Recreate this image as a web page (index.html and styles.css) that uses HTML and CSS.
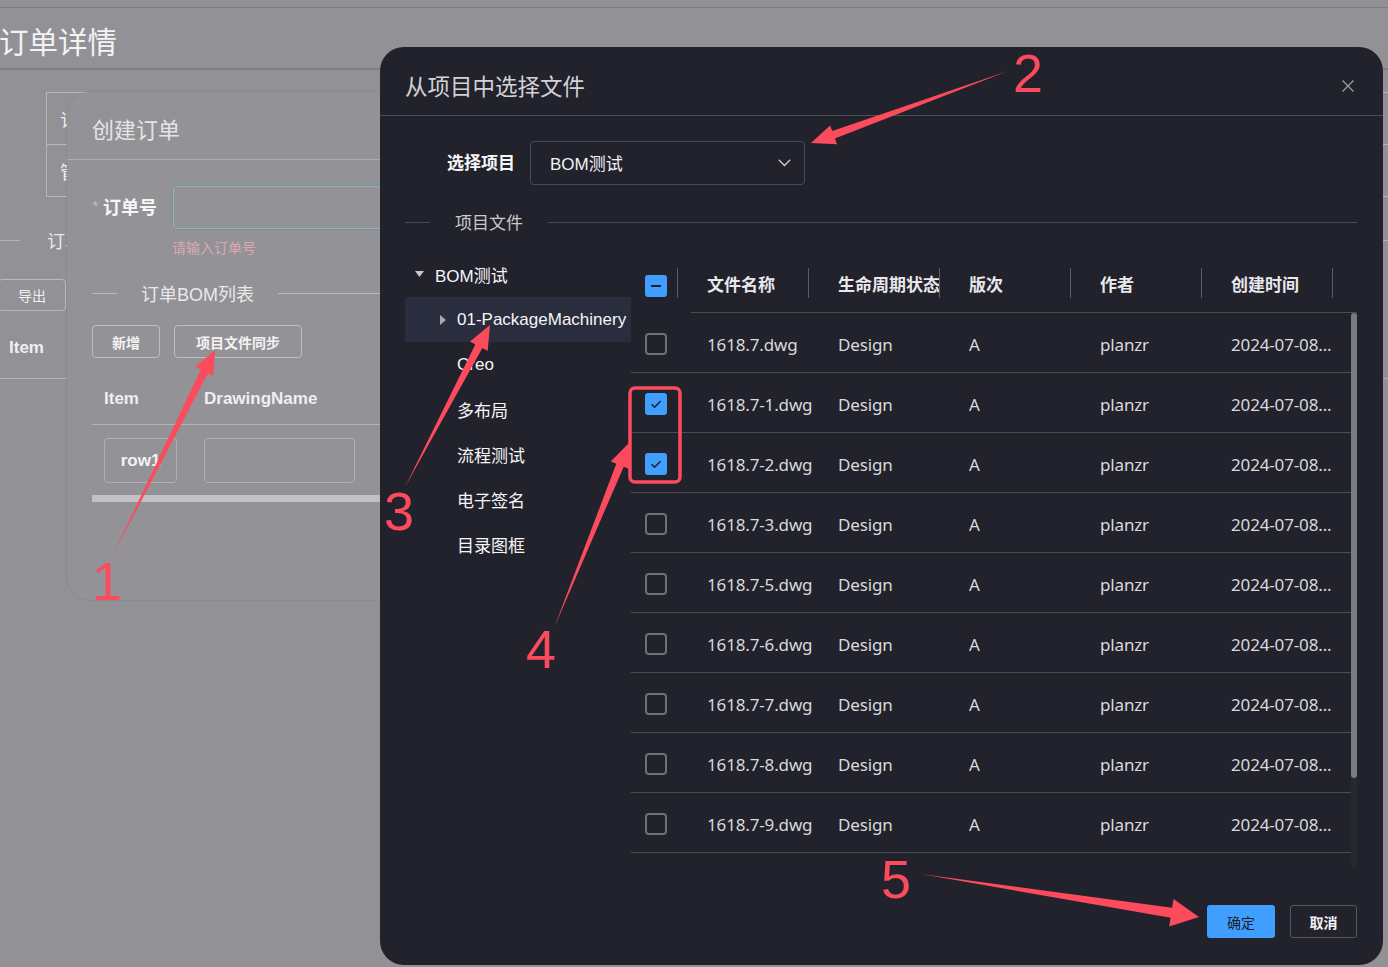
FILE: index.html
```html
<!DOCTYPE html>
<html lang="zh-CN">
<head>
<meta charset="utf-8">
<title>订单详情</title>
<link rel="stylesheet" href="styles.css">
</head>
<body>
<div class="page">
  <div class="topbar"></div>
  <div class="page-head"><h1 class="page-title">订单详情</h1></div>
  <div class="page-body">
    <div class="info-box">
      <div class="info-row">订单号</div>
      <div class="info-row">管理员</div>
    </div>
    <div class="bg-divider"><span class="bg-line-a"></span><span class="bg-divider-text">订单BOM列表</span><span class="bg-line-b"></span></div>
    <div class="bg-btn">导出</div>
    <div class="bg-table-head">Item</div>
  </div>
</div>

<div class="create-dialog">
  <div class="cd-head">创建订单</div>
  <div class="cd-body">
    <div class="cd-form-row">
      <div class="cd-label"><span class="cd-req">*</span>订单号</div>
      <div class="cd-input"></div>
    </div>
    <div class="cd-error">请输入订单号</div>
    <div class="cd-divider"><span class="cd-line-a"></span><span class="cd-divider-text">订单BOM列表</span><span class="cd-line-b"></span></div>
    <div class="cd-btns">
      <div class="cd-btn cd-btn-add">新增</div>
      <div class="cd-btn cd-btn-sync">项目文件同步</div>
    </div>
    <div class="cd-thead">
      <div class="cd-col1">Item</div>
      <div class="cd-col2">DrawingName</div>
    </div>
    <div class="cd-row">
      <div class="cd-in cd-in-1">row1</div>
      <div class="cd-in cd-in-2"></div>
    </div>
    <div class="cd-scroll"></div>
  </div>
</div>

<div class="modal">
  <div class="m-head">
    <div class="m-title">从项目中选择文件</div>
    <svg class="m-close" width="12" height="12" viewBox="0 0 12 12"><path d="M0.5 0.5L11.5 11.5M11.5 0.5L0.5 11.5" stroke="#9c9ca4" stroke-width="1.3" fill="none"/></svg>
  </div>
  <div class="m-body">
    <div class="m-select-row">
      <div class="m-label">选择项目</div>
      <div class="m-select">
        <span>BOM测试</span>
        <svg width="13" height="8" viewBox="0 0 13 8"><path d="M0.8 0.8L6.5 6.5L12.2 0.8" stroke="#d0d0d4" stroke-width="1.3" fill="none"/></svg>
      </div>
    </div>
    <div class="m-divider"><span class="m-line-a"></span><span class="m-divider-text">项目文件</span><span class="m-line-b"></span></div>
    <div class="m-content">
      <div class="tree">
        <div class="tree-row tree-root">
          <svg class="caret-down" width="9" height="6" viewBox="0 0 9 6"><path d="M0 0H9L4.5 6Z" fill="#c6c6cc"/></svg>
          <span>BOM测试</span>
        </div>
        <div class="tree-row tree-sel">
          <svg class="caret-right" width="6" height="10" viewBox="0 0 6 10"><path d="M0 0L6 5L0 10Z" fill="#a9a9b0"/></svg>
          <span>01-PackageMachinery</span>
        </div>
        <div class="tree-row tree-leaf">Creo</div>
        <div class="tree-row tree-leaf">多布局</div>
        <div class="tree-row tree-leaf">流程测试</div>
        <div class="tree-row tree-leaf">电子签名</div>
        <div class="tree-row tree-leaf">目录图框</div>
      </div>
      <div class="table">
        <div class="thead">
          <div class="th th-cb"><span class="cb cb-on"><svg width="22" height="22" viewBox="0 0 22 22"><path d="M6 11H16" stroke="#1c2130" stroke-width="2"/></svg></span></div>
          <div class="th">文件名称</div>
          <div class="th">生命周期状态</div>
          <div class="th">版次</div>
          <div class="th">作者</div>
          <div class="th">创建时间</div>
          <div class="th-fill"></div>
        </div>
        <div class="tbody">
          <div class="rows">
            <div class="tr"><div class="td td-cb"><span class="cb"></span></div><div class="td">1618.7.dwg</div><div class="td">Design</div><div class="td">A</div><div class="td">planzr</div><div class="td">2024-07-08...</div></div>
            <div class="tr"><div class="td td-cb"><span class="cb cb-on"><svg width="22" height="22" viewBox="0 0 22 22"><path d="M6.5 11.2L9.6 14.2L15.5 8.3" stroke="#1c2130" stroke-width="1.6" fill="none"/></svg></span></div><div class="td">1618.7-1.dwg</div><div class="td">Design</div><div class="td">A</div><div class="td">planzr</div><div class="td">2024-07-08...</div></div>
            <div class="tr"><div class="td td-cb"><span class="cb cb-on"><svg width="22" height="22" viewBox="0 0 22 22"><path d="M6.5 11.2L9.6 14.2L15.5 8.3" stroke="#1c2130" stroke-width="1.6" fill="none"/></svg></span></div><div class="td">1618.7-2.dwg</div><div class="td">Design</div><div class="td">A</div><div class="td">planzr</div><div class="td">2024-07-08...</div></div>
            <div class="tr"><div class="td td-cb"><span class="cb"></span></div><div class="td">1618.7-3.dwg</div><div class="td">Design</div><div class="td">A</div><div class="td">planzr</div><div class="td">2024-07-08...</div></div>
            <div class="tr"><div class="td td-cb"><span class="cb"></span></div><div class="td">1618.7-5.dwg</div><div class="td">Design</div><div class="td">A</div><div class="td">planzr</div><div class="td">2024-07-08...</div></div>
            <div class="tr"><div class="td td-cb"><span class="cb"></span></div><div class="td">1618.7-6.dwg</div><div class="td">Design</div><div class="td">A</div><div class="td">planzr</div><div class="td">2024-07-08...</div></div>
            <div class="tr"><div class="td td-cb"><span class="cb"></span></div><div class="td">1618.7-7.dwg</div><div class="td">Design</div><div class="td">A</div><div class="td">planzr</div><div class="td">2024-07-08...</div></div>
            <div class="tr"><div class="td td-cb"><span class="cb"></span></div><div class="td">1618.7-8.dwg</div><div class="td">Design</div><div class="td">A</div><div class="td">planzr</div><div class="td">2024-07-08...</div></div>
            <div class="tr"><div class="td td-cb"><span class="cb"></span></div><div class="td">1618.7-9.dwg</div><div class="td">Design</div><div class="td">A</div><div class="td">planzr</div><div class="td">2024-07-08...</div></div>
          </div>
          <div class="scroll-track"><div class="scroll-thumb"></div></div>
        </div>
      </div>
    </div>
  </div>
  <div class="m-foot">
    <div class="btn btn-primary">确定</div>
    <div class="btn btn-default">取消</div>
  </div>
</div>

<svg class="annot" width="1388" height="967" viewBox="0 0 1388 967">
  <g fill="#fb4b5d">
    <polygon points="113,555 207.9,373.3 213.3,375.9 215,350 195.4,367 200.7,369.7"/>
    <polygon points="1008,71 834.9,138.5 837,144.2 811,143 830.1,125.4 832.2,131"/>
    <polygon points="405,487 482.4,348.1 487.7,350.9 490,325 470,341.6 475.3,344.4"/>
    <polygon points="554,628 623.7,466.7 629.3,469 629,443 610.7,461.5 616.3,463.7"/>
    <polygon points="921,874 1170.6,917.7 1169.2,926.6 1199,917 1173.5,898.9 1172.1,907.8"/>
  </g>
  <rect x="630" y="388" width="50" height="94" rx="5" fill="none" stroke="#fb4b5d" stroke-width="3.5"/>
  <g class="annot-num" fill="#fb4b5d">
    <text x="107" y="600" text-anchor="middle">1</text>
    <text x="1028" y="92" text-anchor="middle">2</text>
    <text x="399" y="530" text-anchor="middle">3</text>
    <text x="541" y="668" text-anchor="middle">4</text>
    <text x="896" y="898" text-anchor="middle">5</text>
  </g>
</svg>
</body>
</html>
```
FILE: styles.css
```css
* { box-sizing: border-box; margin: 0; padding: 0; }
html, body { width: 1388px; height: 967px; overflow: hidden; }
body {
  background: #929196;
  font-family: "Liberation Sans", "Noto Sans CJK SC", sans-serif;
  color: #eeeeee;
  position: relative;
}

/* background page */
.topbar { height: 8px; border-bottom: 1px solid #7c7b80; }
.page-head {
  height: 62px;
  padding-top: 4px;
  border-bottom: 2px solid #807f84;
  display: flex;
  align-items: center;
}
.page-title {
  font-family: "Noto Sans CJK SC", sans-serif;
  font-weight: normal;
  font-size: 29.5px;
  color: #f3f3f3;
  margin-left: -1px;
}
.info-box {
  margin: 22px 0 0 46px;
  height: 105px;
  border: 1px solid #b7b6ba;
  border-right: none;
}
.info-row {
  height: 52px;
  border-bottom: 1px solid #b7b6ba;
  padding-left: 13px;
  display: flex;
  align-items: center;
  font-size: 18px;
}
.info-row:last-child { border-bottom: none; }
.bg-divider { display: flex; align-items: center; height: 20px; margin-top: 33px; }
.bg-line-a { width: 20px; height: 1px; background: #b3b2b6; }
.bg-divider-text { margin: 0 24px 0 27px; font-size: 18px; color: #e8e8e8; }
.bg-line-b { flex: 1; height: 1px; background: #b3b2b6; }
.bg-btn {
  margin: 29px 0 0 -2px;
  width: 68px;
  height: 32px;
  border: 1px solid #bab9bd;
  border-radius: 4px;
  display: flex;
  align-items: center;
  justify-content: center;
  font-size: 14px;
  color: #f0f0f0;
}
.bg-table-head {
  margin-top: 14px;
  height: 54px;
  padding: 0 0 7px 9px;
  border-bottom: 1px solid #b3b2b6;
  display: flex;
  align-items: center;
  font-weight: bold;
  font-size: 17px;
  color: #efefef;
}

/* create order dialog (overlay) */
.create-dialog {
  position: absolute;
  left: 67px;
  top: 92px;
  width: 640px;
  height: 508px;
  background: #939297;
  border-radius: 24px;
  box-shadow: 0 0 0 1px rgba(120, 120, 125, 0.25);
}
.cd-head {
  height: 68px;
  padding: 4px 0 0 25px;
  border-bottom: 1px solid #acabaf;
  display: flex;
  align-items: center;
  font-size: 22px;
  color: #e4e4e4;
}
.cd-body { padding: 0 25px; }
.cd-form-row { display: flex; margin-top: 25px; height: 45px; }
.cd-label {
  width: 80px;
  flex: none;
  padding: 0 15px 3px 0;
  display: flex;
  align-items: center;
  justify-content: flex-end;
  font-weight: bold;
  font-size: 18px;
  color: #f6f6f6;
}
.cd-req { color: #e8b4b7; font-size: 14px; font-weight: normal; margin-right: 5px; }
.cd-input {
  width: 510px;
  height: 45px;
  flex: none;
  border: 1.5px solid #4fa3a9;
  border-radius: 4px;
  box-shadow: inset 0 0 0 1px rgba(230, 170, 175, 0.55);
}
.cd-error { margin-top: 9px; padding-left: 80px; font-size: 14px; line-height: 18px; color: #dcaaae; }
.cd-divider { display: flex; align-items: center; height: 20px; margin-top: 26px; }
.cd-line-a { width: 25px; height: 1px; background: #bab9bd; }
.cd-divider-text { margin: 0 24px; font-size: 18px; color: #e9e9e9; }
.cd-line-b { flex: 1; height: 1px; background: #bab9bd; }
.cd-btns { display: flex; gap: 14px; margin-top: 22px; }
.cd-btn {
  height: 33px;
  border: 1px solid #bebdc1;
  border-radius: 4px;
  display: flex;
  align-items: center;
  justify-content: center;
  font-size: 14px;
  font-weight: bold;
  color: #f3f3f3;
}
.cd-btn-add { width: 68px; }
.cd-btn-sync { width: 128px; }
.cd-thead {
  display: flex;
  height: 67px;
  padding-top: 16px;
  border-bottom: 1px solid #b3b2b6;
  align-items: center;
  font-weight: bold;
  font-size: 17px;
  color: #efefef;
}
.cd-col1 { width: 100px; padding-left: 12px; }
.cd-col2 { padding-left: 12px; }
.cd-row { display: flex; margin-top: 13px; height: 45px; }
.cd-in {
  height: 45px;
  border: 1px solid #b1b0b4;
  border-radius: 4px;
  display: flex;
  align-items: center;
  justify-content: center;
  font-weight: bold;
  font-size: 17px;
  color: #f3f3f3;
}
.cd-in-1 { width: 73px; margin-left: 12px; }
.cd-in-2 { width: 151px; margin-left: 27px; }
.cd-scroll { margin-top: 12px; height: 7px; background: #c1c0c4; }

/* project file modal (overlay) */
.modal {
  position: absolute;
  left: 380px;
  top: 47px;
  width: 1003px;
  height: 918px;
  background: #22222c;
  border-radius: 24px;
  display: flex;
  flex-direction: column;
}
.m-head {
  height: 69px;
  padding: 8px 29px 0 25px;
  border-bottom: 1px solid #4e4e58;
  display: flex;
  align-items: center;
  justify-content: space-between;
}
.m-title { font-size: 22.5px; color: #d2d2d4; font-family: "Noto Sans CJK SC", sans-serif; }
.m-close { margin-top: 2px; }
.m-body { flex: 1; padding: 0 26px 0 25px; display: flex; flex-direction: column; }
.m-select-row { display: flex; margin-top: 25px; height: 44px; }
.m-label {
  width: 125px;
  padding: 0 15px 3px 0;
  display: flex;
  align-items: center;
  justify-content: flex-end;
  font-weight: bold;
  font-size: 17px;
  color: #f6f6f6;
}
.m-select {
  width: 275px;
  border: 1px solid #4c4c56;
  border-radius: 4px;
  padding: 0 13px 2px 19px;
  display: flex;
  align-items: center;
  justify-content: space-between;
  font-size: 17px;
  color: #f3f3f3;
}
.m-select svg { margin-top: 2px; }
.m-divider { display: flex; align-items: center; height: 24px; margin-top: 25px; }
.m-line-a { width: 25px; height: 1px; background: #4a4a54; }
.m-divider-text { margin: 0 25px 2px; font-size: 17px; color: #cacaca; }
.m-line-b { flex: 1; height: 1px; background: #4a4a54; }
.m-content { display: flex; margin-top: 18px; }

.tree { width: 226px; }
.tree-row {
  height: 45px;
  display: flex;
  align-items: center;
  font-size: 17px;
  color: #f6f6f6;
  white-space: nowrap;
  overflow: hidden;
}
.tree-root { padding: 0 0 1px 10px; }
.tree-root .caret-down { margin-right: 11px; flex: none; }
.tree-sel { padding-left: 35px; background: #292d3d; }
.tree-sel .caret-right { margin-right: 11px; flex: none; }
.tree-leaf { padding-left: 52px; }

.table { width: 726px; }
.thead { display: flex; height: 61px; }
.th {
  position: relative;
  width: 131px;
  flex: none;
  padding: 3px 13px 0 16px;
  display: flex;
  align-items: center;
  font-weight: bold;
  font-size: 17px;
  color: #e8e8ea;
  white-space: nowrap;
  overflow: hidden;
  border-bottom: 1px solid #4c4c55;
}
.th::after {
  content: "";
  position: absolute;
  right: 13px;
  top: 16px;
  width: 1px;
  height: 30px;
  background: #5c5c66;
}
.th-cb { width: 60px; padding: 6px 0 0 14px; border-bottom: none; }
.th-fill { flex: 1; border-bottom: 1px solid #4c4c55; }

.cb {
  width: 22px;
  height: 22px;
  border: 2px solid #6f6f76;
  border-radius: 4px;
  display: block;
}
.cb-on { border: none; background: #409eff; border-radius: 3px; }
.cb svg { display: block; }

.tbody { display: flex; height: 554px; overflow: hidden; }
.rows { width: 720px; }
.tr {
  display: flex;
  height: 60px;
  padding-top: 3px;
  border-bottom: 1px solid #4c4c55;
}
.td {
  width: 131px;
  flex: none;
  padding-left: 16px;
  display: flex;
  align-items: center;
  font-family: "Noto Sans", "Noto Sans CJK SC", sans-serif;
  font-size: 17px;
  letter-spacing: -0.15px;
  color: #d9d9dc;
  white-space: nowrap;
  overflow: hidden;
}
.td-cb { width: 60px; padding-left: 14px; }
.scroll-track { width: 6px; background: #282831; border-radius: 3px; }
.scroll-thumb { height: 465px; background: #7a7a82; border-radius: 3px; }

.m-foot {
  display: flex;
  justify-content: flex-end;
  gap: 15px;
  padding: 0 26px 27px 0;
}
.btn {
  height: 33px;
  border-radius: 3px;
  display: flex;
  align-items: center;
  justify-content: center;
  font-size: 14px;
}
.btn-primary { width: 68px; background: #409eff; color: #1b1f2b; }
.btn-default { width: 67px; border: 1px solid #56565f; color: #f2f2f2; font-weight: bold; }

/* screenshot annotations (overlay) */
.annot { position: absolute; left: 0; top: 0; pointer-events: none; }
.annot-num text { font-family: "Liberation Sans", sans-serif; font-size: 54px; }
```
